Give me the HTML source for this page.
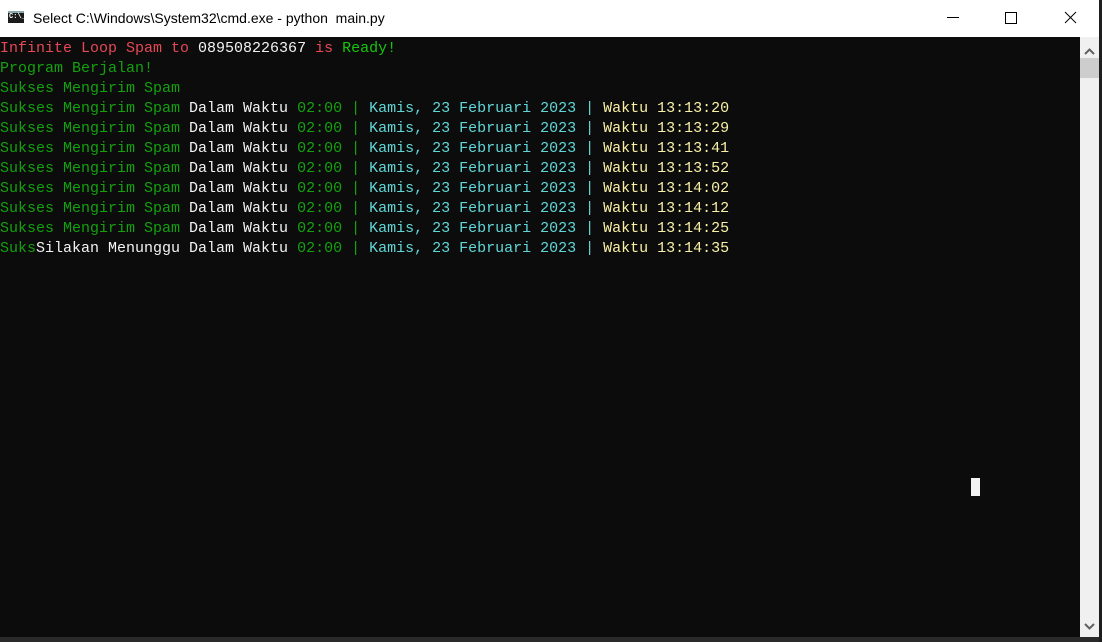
<!DOCTYPE html>
<html><head><meta charset="utf-8"><style>
html,body{margin:0;padding:0;width:1102px;height:642px;overflow:hidden;background:#0c0c0c;position:relative}
.tb{position:absolute;left:0;top:0;width:1102px;height:37px;background:#fff}
.tt{position:absolute;left:33px;top:10px;font:14px "Liberation Sans",sans-serif;color:#000}
.icon{position:absolute;left:8px;top:11px;width:16px;height:12px;background:#1b1b1b;border-top:2px solid #8aa;box-sizing:border-box}
.icon span{position:absolute;left:1px;top:0px;font:bold 7px "Liberation Mono",monospace;color:#fff;line-height:9px}
.term{position:absolute;left:0;top:39px;font:15px "Liberation Mono",monospace;line-height:20px;white-space:pre;color:#f2f2f2}
.r{color:#e74856}.g{color:#16c60c}.w{color:#f2f2f2}.c{color:#61d6d6}.y{color:#f9f1a5}.dg{color:#13a10e}
.sb{position:absolute;left:1080px;top:37px;width:19px;height:600px;background:#f0f0f0}
.thumb{position:absolute;left:1080px;top:58px;width:19px;height:20px;background:#cdcdcd}
.edge{position:absolute;left:1099px;top:0;width:3px;height:642px;background:#1e1e1e}
.bot{position:absolute;left:0;top:637px;width:1099px;height:5px;background:#2a2a2a}
.cur{position:absolute;left:971px;top:478px;width:9px;height:18px;background:#f2f2f2}
</style></head><body>
<div class="tb">
<div class="icon"><span>C:\_</span></div>
<div class="tt">Select C:\Windows\System32\cmd.exe - python&nbsp; main.py</div>
<svg style="position:absolute;left:940px;top:8px" width="160" height="22">
<line x1="7" y1="9.5" x2="19" y2="9.5" stroke="#000" stroke-width="1"/>
<rect x="65.5" y="4.5" width="11" height="11" fill="none" stroke="#000" stroke-width="1"/>
<line x1="125" y1="4" x2="136" y2="15" stroke="#000" stroke-width="1"/>
<line x1="136" y1="4" x2="125" y2="15" stroke="#000" stroke-width="1"/>
</svg>
</div>
<div class="edge"></div>
<div class="term"><span class="r">Infinite Loop Spam to </span><span class="w">089508226367</span><span class="r"> is </span><span class="g">Ready!</span>
<span class="dg">Program Berjalan!</span>
<span class="dg">Sukses Mengirim Spam</span>
<span class="dg">Sukses Mengirim Spam</span> Dalam Waktu <span class="dg">02:00 |</span><span class="c"> Kamis, 23 Februari 2023 |</span><span class="y"> Waktu 13:13:20</span>
<span class="dg">Sukses Mengirim Spam</span> Dalam Waktu <span class="dg">02:00 |</span><span class="c"> Kamis, 23 Februari 2023 |</span><span class="y"> Waktu 13:13:29</span>
<span class="dg">Sukses Mengirim Spam</span> Dalam Waktu <span class="dg">02:00 |</span><span class="c"> Kamis, 23 Februari 2023 |</span><span class="y"> Waktu 13:13:41</span>
<span class="dg">Sukses Mengirim Spam</span> Dalam Waktu <span class="dg">02:00 |</span><span class="c"> Kamis, 23 Februari 2023 |</span><span class="y"> Waktu 13:13:52</span>
<span class="dg">Sukses Mengirim Spam</span> Dalam Waktu <span class="dg">02:00 |</span><span class="c"> Kamis, 23 Februari 2023 |</span><span class="y"> Waktu 13:14:02</span>
<span class="dg">Sukses Mengirim Spam</span> Dalam Waktu <span class="dg">02:00 |</span><span class="c"> Kamis, 23 Februari 2023 |</span><span class="y"> Waktu 13:14:12</span>
<span class="dg">Sukses Mengirim Spam</span> Dalam Waktu <span class="dg">02:00 |</span><span class="c"> Kamis, 23 Februari 2023 |</span><span class="y"> Waktu 13:14:25</span>
<span class="dg">Suks</span>Silakan Menunggu Dalam Waktu <span class="dg">02:00 |</span><span class="c"> Kamis, 23 Februari 2023 |</span><span class="y"> Waktu 13:14:35</span></div>
<div class="sb"></div>
<div class="thumb"></div>
<svg style="position:absolute;left:1080px;top:40px" width="19" height="600">
<polyline points="5,14 9.5,9.5 14,14" fill="none" stroke="#606060" stroke-width="2"/>
<polyline points="5,584 9.5,588.5 14,584" fill="none" stroke="#606060" stroke-width="2"/>
</svg>
<div class="bot"></div>
<div class="cur"></div>
</body></html>
